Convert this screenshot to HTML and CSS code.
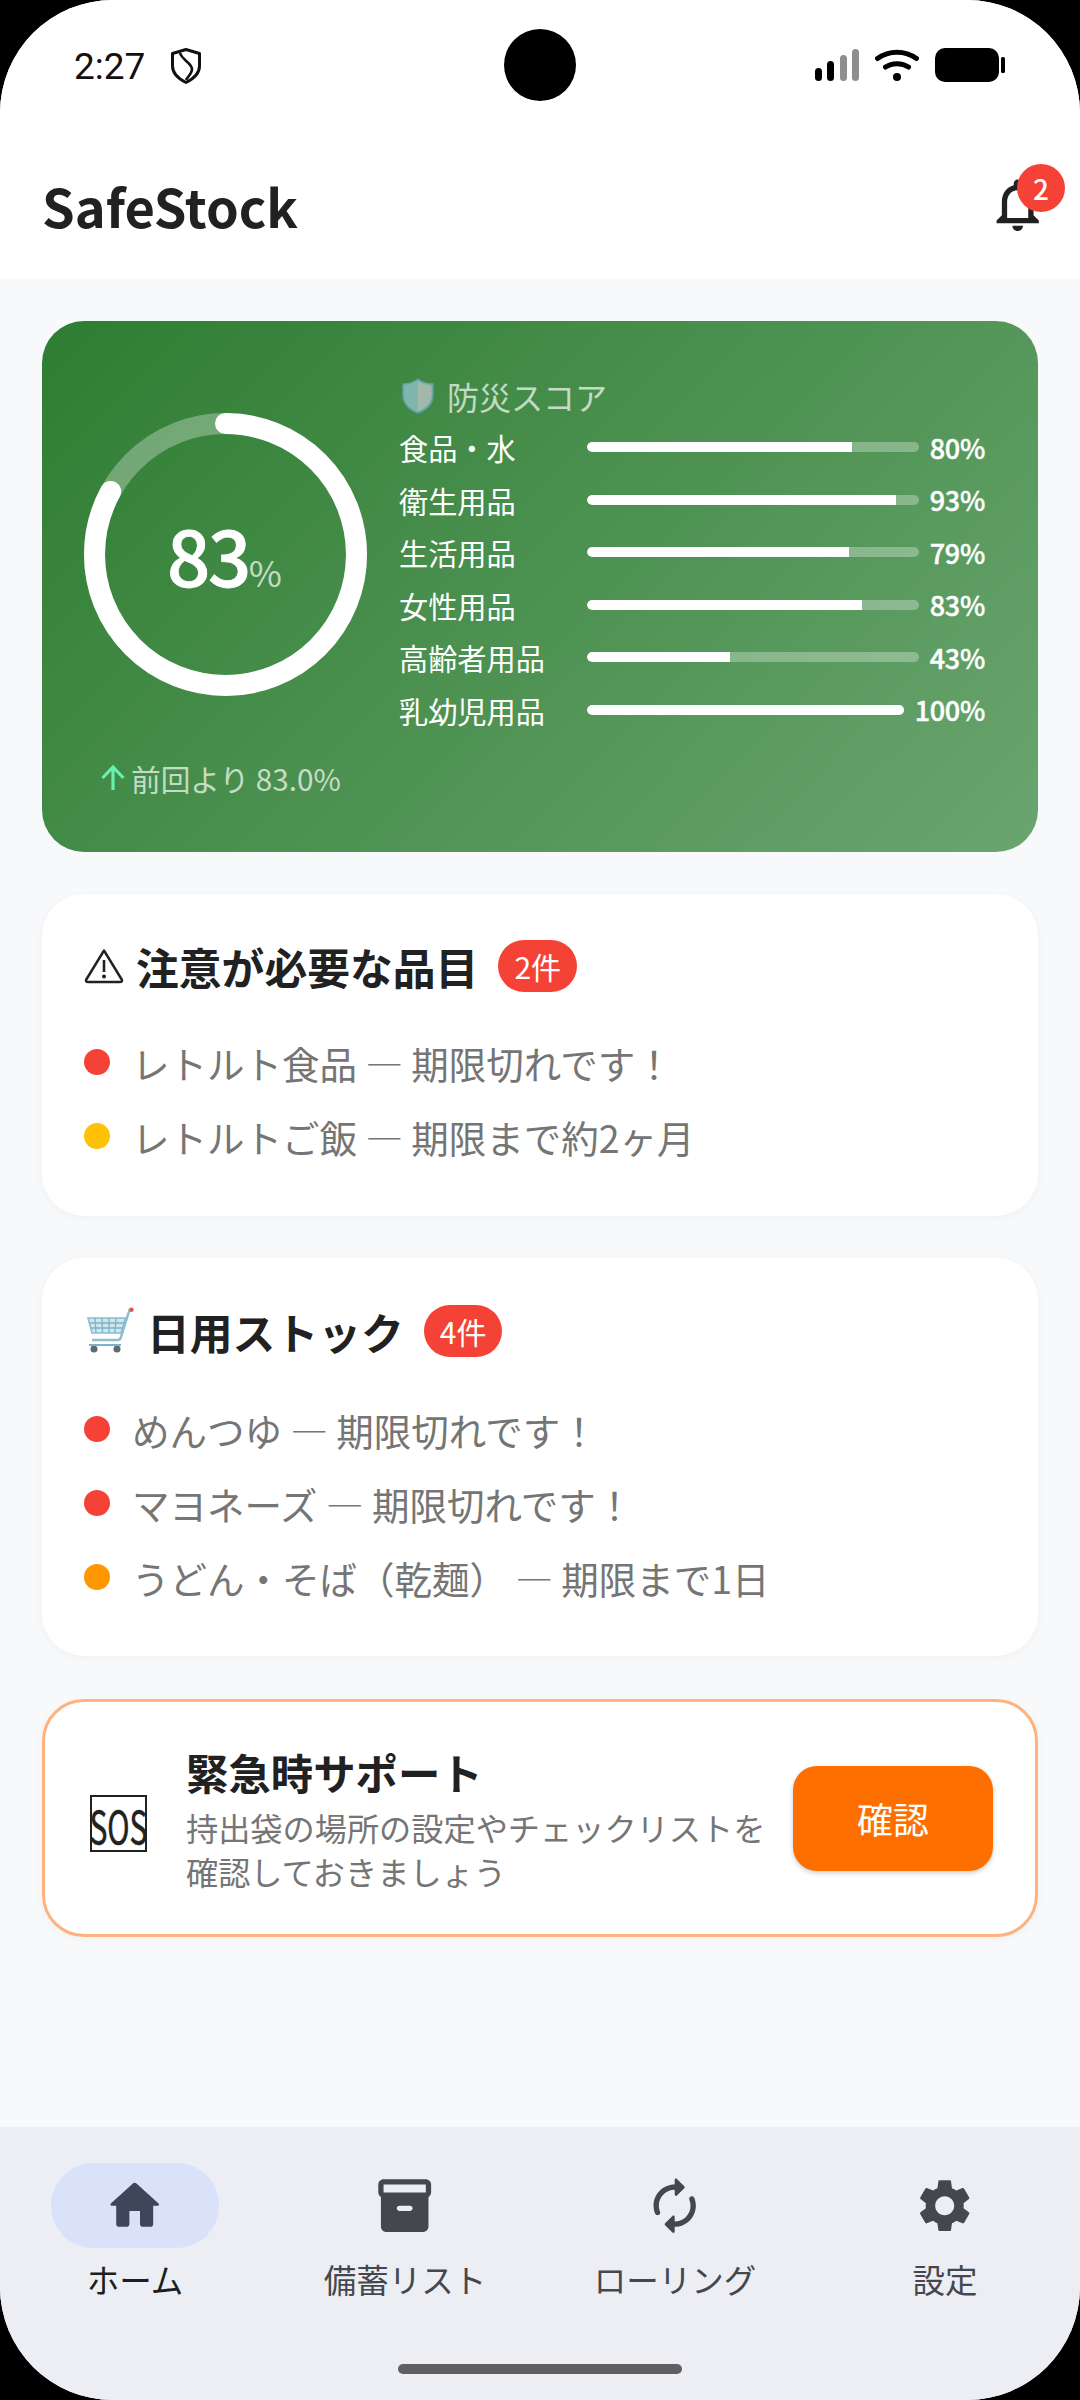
FILE: index.html
```html
<!DOCTYPE html>
<html lang="ja">
<head>
  <meta charset="UTF-8" />
  <title>SafeStock</title>
  <link rel="stylesheet" href="styles.css">
</head>
<body>
<div class="screen">

  <div class="status-bar">
    <div class="status-left">
      <span class="time">2:27</span>
      <svg class="status-shield" width="30" height="36" viewBox="0 0 30 36"><path d="M15 1.500 L28.500 5.500 V18 C28.500 26 21 31.500 15 34.500 C9 31.500 1.500 26 1.500 18 V5.500 Z" fill="none" stroke="#111" stroke-width="3" stroke-linejoin="round"/><path d="M9 5 C11 12 21 15 21 21 C21 26 17 28 15 32" fill="none" stroke="#111" stroke-width="2.6"/></svg>
    </div>
    <div class="camera"></div>
    <div class="status-right">
      <svg width="44" height="32" viewBox="0 0 44 32"><rect x="0" y="19" width="7" height="13" rx="3.5" fill="#000"/><rect x="12" y="12" width="7" height="20" rx="3.5" fill="#000"/><rect x="25" y="6" width="7" height="26" rx="3.5" fill="#8e8e8e"/><rect x="37" y="0" width="7" height="32" rx="3.5" fill="#8e8e8e"/></svg>
      <svg width="44" height="32" viewBox="0 0 44 32"><path d="M2.5 9.5 C14 1 30 1 41.5 9.5" fill="none" stroke="#000" stroke-width="5" stroke-linecap="round"/><path d="M10.500 18 C17 13.500 27 13.500 33.500 18" fill="none" stroke="#000" stroke-width="5" stroke-linecap="round"/><circle cx="22" cy="28" r="4" fill="#000"/></svg>
      <svg width="70" height="34" viewBox="0 0 70 34"><rect x="0" y="0" width="64" height="34" rx="10" fill="#000"/><rect x="66" y="9" width="4" height="16" rx="1.500" fill="#000"/></svg>
    </div>
  </div>

  <header class="app-header">
    <h1 class="app-title">SafeStock</h1>
    <div class="bell">
      <svg class="icon" viewBox="0 0 24 24" fill="#212121"><path d="M12 22c1.1 0 2-.9 2-2h-4c0 1.1.9 2 2 2zm6-6v-5c0-3.07-1.63-5.64-4.5-6.32V4c0-.83-.67-1.5-1.5-1.5s-1.5.67-1.5 1.5v.68C7.64 5.36 6 7.92 6 11v5l-2 2v1h16v-1l-2-2zm-2 1H8v-6c0-2.48 1.51-4.5 4-4.5s4 2.02 4 4.500v6z"/></svg>
      <span class="bell-badge">2</span>
    </div>
  </header>

  <main class="content">

    <section class="hero">
      <div class="hero-top">
        <div class="ring">
          <svg width="283" height="283" viewBox="0 0 283 283">
            <circle cx="141.500" cy="141.500" r="131" fill="none" stroke="rgba(255,255,255,.3)" stroke-width="21"/>
            <circle cx="141.500" cy="141.500" r="131" fill="none" stroke="#fff" stroke-width="21" stroke-linecap="round" pathLength="100" stroke-dasharray="83 100" transform="rotate(-90 141.500 141.500)"/>
          </svg>
          <div class="ring-label"><span class="ring-num">83</span><span class="ring-unit">%</span></div>
        </div>
        <div class="scores">
          <div class="score-title">
            <svg width="32" height="36" viewBox="0 0 32 36"><path d="M16 1 C20 4 26 6 31 6 V17 C31 26 24 32 16 35 C8 32 1 26 1 17 V6 C6 6 12 4 16 1 Z" fill="#7fb5ad" stroke="#5f9f9c" stroke-width="1.500"/><path d="M16 3 C20 6 25 7.500 29 8 V17 C29 25 23 30 16 33 Z" fill="#a3b8ab"/></svg>
            <span>防災スコア</span>
          </div>
          <div class="score-row"><span class="score-name">食品・水</span><div class="bar"><div class="bar-fill" style="width:80%"></div></div><span class="score-val">80%</span></div>
          <div class="score-row"><span class="score-name">衛生用品</span><div class="bar"><div class="bar-fill" style="width:93%"></div></div><span class="score-val">93%</span></div>
          <div class="score-row"><span class="score-name">生活用品</span><div class="bar"><div class="bar-fill" style="width:79%"></div></div><span class="score-val">79%</span></div>
          <div class="score-row"><span class="score-name">女性用品</span><div class="bar"><div class="bar-fill" style="width:83%"></div></div><span class="score-val">83%</span></div>
          <div class="score-row"><span class="score-name">高齢者用品</span><div class="bar"><div class="bar-fill" style="width:43%"></div></div><span class="score-val">43%</span></div>
          <div class="score-row"><span class="score-name">乳幼児用品</span><div class="bar"><div class="bar-fill" style="width:100%"></div></div><span class="score-val">100%</span></div>
        </div>
      </div>
      <div class="hero-change">
        <svg width="28" height="28" viewBox="0 0 28 28"><path d="M14 26 V4 M3.500 14 L14 3 L24.500 14" fill="none" stroke="#69f0ae" stroke-width="3.200"/></svg>
        <span>前回より 83.0%</span>
      </div>
    </section>

    <section class="card card-alert">
      <div class="card-head">
        <svg class="head-icon" width="40" height="36" viewBox="0 0 40 36"><path d="M20 2.500 L38 32 Q38.500 34 36 34 H4 Q1.500 34 2 32 Z" fill="none" stroke="#212121" stroke-width="2.400" stroke-linejoin="round"/><path d="M20 12 V24" stroke="#212121" stroke-width="2.600"/><circle cx="20" cy="28.500" r="2" fill="#212121"/></svg>
        <h2 class="card-title">注意が必要な品目</h2>
        <span class="count">2件</span>
      </div>
      <ul class="items">
        <li><span class="dot red"></span>レトルト食品 — 期限切れです！</li>
        <li><span class="dot amber"></span>レトルトご飯 — 期限まで約2ヶ月</li>
      </ul>
    </section>

    <section class="card">
      <div class="card-head">
        <svg class="head-icon cart" width="48" height="48" viewBox="0 0 48 48">
          <path d="M46 3 H43.500 L35 30 Q34.500 33 31 33 H6" fill="none" stroke="#8dbdd0" stroke-width="2.400"/>
          <path d="M2 11 H39.500 L35 26 H6 Z" fill="#cfe6ee" stroke="#8dbdd0" stroke-width="1.600"/>
          <path d="M9 11 L10 26 M16 11 L16.500 26 M23 11 V26 M30 11 L29 26 M3.500 16 H38 M5 21 H36.500" stroke="#7fb2c6" stroke-width="1.300"/>
          <circle cx="8" cy="42" r="3.500" fill="#5b6b73"/><circle cx="31" cy="42" r="3.500" fill="#5b6b73"/>
          <path d="M3 38 H35" stroke="#7fb2c6" stroke-width="2"/>
          <circle cx="45.500" cy="2.800" r="2.200" fill="#e0564a"/>
        </svg>
        <h2 class="card-title">日用ストック</h2>
        <span class="count">4件</span>
      </div>
      <ul class="items">
        <li><span class="dot red"></span>めんつゆ — 期限切れです！</li>
        <li><span class="dot red"></span>マヨネーズ — 期限切れです！</li>
        <li><span class="dot orange"></span>うどん・そば（乾麺） — 期限まで1日</li>
      </ul>
    </section>

    <section class="support">
      <div class="sos"><span>SOS</span></div>
      <div class="support-text">
        <h2 class="support-title">緊急時サポート</h2>
        <p class="support-desc">持出袋の場所の設定やチェックリストを確認しておきましょう</p>
      </div>
      <button class="confirm">確認</button>
    </section>

  </main>

  <nav class="bottom-nav">
    <div class="nav-items">
      <div class="nav-item active">
        <div class="nav-pill"><svg class="icon" viewBox="0 0 24 24"><path d="M10 19v-5h4v5c0 .55.45 1 1 1h3c.55 0 1-.45 1-1v-7h1.700c.46 0 .68-.57.33-.87L12.670 3.600c-.38-.34-.96-.34-1.340 0l-8.360 7.530c-.34.3-.13.87.33.87H5v7c0 .55.45 1 1 1h3c.55 0 1-.45 1-1z"/></svg></div>
        <span class="nav-label">ホーム</span>
      </div>
      <div class="nav-item">
        <div class="nav-pill"><svg class="icon" viewBox="0 0 24 24"><path d="M20 2H4c-1 0-2 .9-2 2v3.010c0 .72.43 1.340 1 1.690V20c0 1.100 1.100 2 2 2h14c.9 0 2-.9 2-2V8.700c.57-.35 1-.97 1-1.690V4c0-1.100-1-2-2-2zm-6 12h-4c-.55 0-1-.45-1-1s.45-1 1-1h4c.55 0 1 .45 1 1s-.45 1-1 1zm6-7H4V4h16v3z"/></svg></div>
        <span class="nav-label">備蓄リスト</span>
      </div>
      <div class="nav-item">
        <div class="nav-pill"><svg class="icon" viewBox="0 0 24 24"><path d="M12 6v1.790c0 .45.54.67.85.35l2.790-2.790c.2-.2.2-.51 0-.71l-2.790-2.790c-.31-.31-.85-.09-.85.36V4c-4.420 0-8 3.580-8 8 0 1.040.2 2.040.57 2.950.27.67 1.130.85 1.640.34.27-.27.38-.68.23-1.040C6.150 13.560 6 12.790 6 12c0-3.310 2.690-6 6-6zm5.790 2.710c-.27.27-.38.69-.23 1.040.28.7.44 1.460.44 2.250 0 3.310-2.690 6-6 6v-1.790c0-.45-.54-.67-.85-.35l-2.790 2.790c-.2.2-.2.51 0 .71l2.790 2.790c.31.31.85.09.85-.35V20c4.420 0 8-3.580 8-8 0-1.040-.2-2.040-.57-2.950-.27-.67-1.130-.85-1.640-.34z"/></svg></div>
        <span class="nav-label">ローリング</span>
      </div>
      <div class="nav-item">
        <div class="nav-pill"><svg class="icon" viewBox="0 0 24 24"><path d="M19.140 12.940c.04-.3.06-.61.06-.94 0-.32-.02-.64-.07-.94l2.030-1.580c.18-.14.23-.41.12-.61l-1.920-3.320c-.12-.22-.37-.29-.59-.22l-2.390.96c-.5-.38-1.030-.7-1.620-.94l-.36-2.540c-.04-.24-.24-.41-.48-.41h-3.840c-.24 0-.43.17-.47.41l-.36 2.540c-.59.24-1.130.57-1.620.94l-2.390-.96c-.22-.08-.47 0-.59.22L2.740 8.870c-.12.21-.08.47.12.61l2.030 1.580c-.05.3-.09.63-.09.94s.02.64.07.94l-2.030 1.580c-.18.14-.23.41-.12.61l1.920 3.320c.12.22.37.29.59.22l2.390-.96c.5.38 1.030.7 1.620.94l.36 2.540c.05.24.24.41.48.41h3.840c.24 0 .44-.17.47-.41l.36-2.540c.59-.24 1.130-.56 1.620-.94l2.390.96c.22.08.47 0 .59-.22l1.920-3.320c.12-.22.07-.47-.12-.61l-2.010-1.580zM12 15.600c-1.980 0-3.600-1.620-3.600-3.600s1.620-3.600 3.600-3.600 3.600 1.620 3.600 3.600-1.620 3.600-3.600 3.600z"/></svg></div>
        <span class="nav-label">設定</span>
      </div>
    </div>
    <div class="home-bar"></div>
  </nav>

</div>
</body>
</html>
```

FILE: styles.css
```css
* {
  box-sizing: border-box;
}
body {
  margin: 0;
  background: #000;
  font-family: "Noto Sans CJK JP", "Noto Sans", sans-serif;
}
h1, h2, p, ul {
  margin: 0;
  padding: 0;
}
.screen {
  width: 1080px;
  height: 2400px;
  border-radius: 113px;
  overflow: hidden;
  background: #f8f9fb;
  display: flex;
  flex-direction: column;
}
.icon {
  width: 63.4px;
  height: 63.4px;
  display: block;
}

/* status bar */
.status-bar {
  height: 130px;
  background: #fff;
  display: grid;
  grid-template-columns: 1fr auto 1fr;
  align-items: center;
  padding: 0 75px 0 74px;
}
.status-left {
  display: flex;
  align-items: center;
  gap: 26px;
  padding-top: 2px;
}
.time {
  font-family: Roboto, sans-serif;
  font-size: 37px;
  color: #111;
}
.camera {
  width: 72px;
  height: 72px;
  border-radius: 50%;
  background: #000;
}
.status-right {
  display: flex;
  align-items: center;
  justify-content: flex-end;
  gap: 16px;
}

/* app header */
.app-header {
  height: 149px;
  background: #fff;
  display: flex;
  align-items: center;
  justify-content: space-between;
  padding: 0 31px 0 42px;
}
.app-title {
  font-size: 52.4px;
  font-weight: 700;
  color: #212121;
}
.bell {
  position: relative;
}
.bell-badge {
  position: absolute;
  top: -9px;
  right: -16px;
  width: 48px;
  height: 48px;
  border-radius: 50%;
  background: #f44336;
  color: #fff;
  font-size: 28px;
  font-weight: 500;
  display: flex;
  align-items: center;
  justify-content: center;
}

/* content */
.content {
  flex: 1;
  padding: 42px;
  display: flex;
  flex-direction: column;
  gap: 42px;
}
.hero {
  border-radius: 42px;
  background: linear-gradient(135deg, #2e7d32, #6aa56f);
  padding: 54px 53px 54px 42px;
  color: #fff;
}
.hero-top {
  display: flex;
  align-items: center;
  gap: 32px;
}
.ring {
  display: grid;
  place-items: center;
  flex: none;
  margin-bottom: 2px;
}
.ring svg, .ring-label {
  grid-area: 1 / 1;
}
.ring-label {
  display: flex;
  align-items: baseline;
  padding: 0 2px 2px 0;
}
.ring-num {
  font-size: 76px;
  font-weight: 500;
  letter-spacing: -2.5px;
  -webkit-text-stroke: .8px #fff;
}
.ring-unit {
  font-size: 36px;
  color: rgba(255,255,255,.7);
}
.scores {
  flex: 1;
  min-width: 0;
}
.score-title {
  height: 46px;
  display: flex;
  align-items: center;
  gap: 13px;
  padding: 0 0 4px 3px;
  font-size: 32px;
  color: rgba(255,255,255,.7);
}
.score-row {
  height: 52.5px;
  display: flex;
  align-items: center;
}
.score-name {
  width: 188px;
  flex: none;
  font-size: 29.2px;
}
.bar {
  flex: 1;
  height: 10px;
  border-radius: 5px;
  overflow: hidden;
  background: rgba(255,255,255,.3);
}
.bar-fill {
  height: 100%;
  background: #fff;
  border-radius: 5px 0 0 5px;
}
.score-val {
  margin-left: 11px;
  font-size: 27px;
  font-weight: 500;
  letter-spacing: -.3px;
  -webkit-text-stroke: .4px #fff;
}
.hero-change {
  margin-top: 22px;
  height: 40px;
  display: flex;
  align-items: center;
  gap: 4px;
  padding-left: 15px;
  font-size: 29.7px;
  color: rgba(255,255,255,.7);
}

/* list cards */
.card {
  background: #fff;
  border-radius: 42px;
  padding: 47px 42px 55px;
  box-shadow: 0 2px 8px rgba(0,0,0,.04);
}
.card-alert {
  padding: 46px 42px 56px;
}
.card-alert .items {
  margin-top: 46px;
}
.card-head {
  display: flex;
  align-items: center;
  gap: 12px;
}
.card-title {
  font-size: 42.8px;
  font-weight: 700;
  line-height: 52px;
  color: #212121;
  margin-right: 8px;
}
.head-icon {
  flex: none;
}
.head-icon.cart {
  margin: 0 1.500px;
}
.count {
  height: 52px;
  min-width: 77px;
  border-radius: 26px;
  padding: 0 16px;
  background: #f44336;
  color: #fff;
  font-size: 30px;
  display: flex;
  align-items: center;
  justify-content: center;
}
.items {
  list-style: none;
  margin-top: 48px;
  display: flex;
  flex-direction: column;
  gap: 26px;
}
.items li {
  display: flex;
  align-items: center;
  gap: 22px;
  height: 48px;
  font-size: 37.5px;
  color: #757575;
}
.dot {
  width: 26px;
  height: 26px;
  border-radius: 50%;
  flex: none;
}
.red { background: #f44336; }
.amber { background: #ffc107; }
.orange { background: #ff9800; }

/* support card */
.support {
  background: #fff;
  border: 3px solid #ffb27f;
  border-radius: 42px;
  height: 238px;
  margin-top: 1px;
  padding: 0 42px 0 45px;
  display: flex;
  align-items: center;
  box-shadow: 0 2px 8px rgba(0,0,0,.04);
}
.sos {
  width: 57px;
  height: 57px;
  flex: none;
  margin-top: 11px;
  border: 2px solid #212121;
  display: flex;
  align-items: center;
  justify-content: center;
}
.sos span {
  font-size: 30px;
  line-height: 1;
  color: #212121;
  -webkit-text-stroke: .4px #212121;
  transform: scaleY(1.5);
}
.support-text {
  flex: 1;
  margin-left: 39px;
  padding-top: 3px;
  min-width: 0;
}
.support-title {
  font-size: 42.4px;
  font-weight: 700;
  line-height: 52px;
  color: #212121;
}
.support-desc {
  font-size: 32.2px;
  line-height: 44px;
  color: #757575;
  margin-top: 7px;
}
.confirm {
  width: 200px;
  height: 105px;
  flex: none;
  margin-left: 12px;
  border: none;
  border-radius: 24px;
  background: #ff6f00;
  color: #fff;
  font-family: inherit;
  font-size: 36px;
  box-shadow: 0 2px 5px rgba(0,0,0,.2);
}

/* bottom nav */
.bottom-nav {
  height: 273px;
  background: #eceef3;
  padding-top: 36px;
}
.nav-items {
  display: grid;
  grid-template-columns: repeat(4, 1fr);
}
.nav-item {
  display: flex;
  flex-direction: column;
  align-items: center;
}
.nav-pill {
  width: 168px;
  height: 85px;
  border-radius: 42px;
  display: flex;
  align-items: center;
  justify-content: center;
  fill: #44474e;
}
.nav-item.active .nav-pill {
  background: #dae2f9;
  fill: #3d4759;
}
.nav-label {
  margin-top: 9px;
  height: 44px;
  line-height: 44px;
  font-size: 32.5px;
  color: #44474e;
}
.nav-item.active .nav-label {
  color: #1e1e22;
}
.home-bar {
  width: 284px;
  height: 10px;
  margin: 63px auto 0;
  border-radius: 5px;
  background: #5f5f61;
}
```
